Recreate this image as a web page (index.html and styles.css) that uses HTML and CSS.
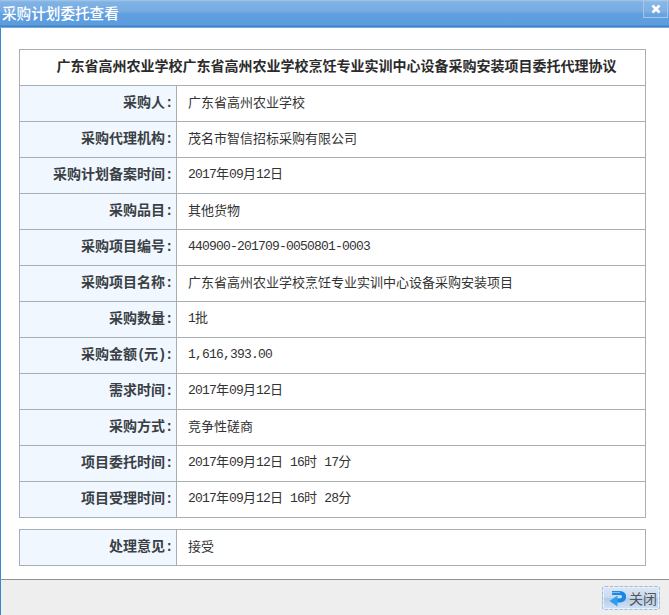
FILE: index.html
```html
<!DOCTYPE html>
<html lang="zh-CN">
<head>
<meta charset="utf-8">
<title>采购计划委托查看</title>
<link rel="stylesheet" href="styles.css">
</head>
<body>
<div class="dialog">
  <header class="titlebar">
    <span class="title">采购计划委托查看</span>
    <button class="close-x" type="button" aria-label="关闭">
      <svg width="10" height="10" viewBox="0 0 10 10"><path d="M1.5 1.5 L8.5 8.5 M8.5 1.5 L1.5 8.5" stroke="#fff" stroke-width="2.6" fill="none"/></svg>
    </button>
  </header>
  <main class="content">
    <table class="info">
      <colgroup><col class="col-label"><col></colgroup>
      <tr><th class="head" colspan="2">广东省高州农业学校广东省高州农业学校烹饪专业实训中心设备采购安装项目委托代理协议</th></tr>
      <tr><th>采购人<span class="num">:</span></th><td>广东省高州农业学校</td></tr>
      <tr><th>采购代理机构<span class="num">:</span></th><td>茂名市智信招标采购有限公司</td></tr>
      <tr><th>采购计划备案时间<span class="num">:</span></th><td><span class="num">2017</span>年<span class="num">09</span>月<span class="num">12</span>日</td></tr>
      <tr><th>采购品目<span class="num">:</span></th><td>其他货物</td></tr>
      <tr><th>采购项目编号<span class="num">:</span></th><td><span class="num">440900-201709-0050801-0003</span></td></tr>
      <tr><th>采购项目名称<span class="num">:</span></th><td>广东省高州农业学校烹饪专业实训中心设备采购安装项目</td></tr>
      <tr><th>采购数量<span class="num">:</span></th><td><span class="num">1</span>批</td></tr>
      <tr><th>采购金额<span class="num">(</span>元<span class="num">):</span></th><td><span class="num">1,616,393.00</span></td></tr>
      <tr><th>需求时间<span class="num">:</span></th><td><span class="num">2017</span>年<span class="num">09</span>月<span class="num">12</span>日</td></tr>
      <tr><th>采购方式<span class="num">:</span></th><td>竞争性磋商</td></tr>
      <tr><th>项目委托时间<span class="num">:</span></th><td><span class="num">2017</span>年<span class="num">09</span>月<span class="num">12</span>日<span class="num"> 16</span>时<span class="num"> 17</span>分</td></tr>
      <tr><th>项目受理时间<span class="num">:</span></th><td><span class="num">2017</span>年<span class="num">09</span>月<span class="num">12</span>日<span class="num"> 16</span>时<span class="num"> 28</span>分</td></tr>
    </table>
    <table class="info opinion">
      <colgroup><col class="col-label"><col></colgroup>
      <tr><th>处理意见<span class="num">:</span></th><td>接受</td></tr>
    </table>
  </main>
  <footer class="footer">
    <button class="close-btn" type="button">
      <svg class="close-icon" width="17" height="17" viewBox="0 0 17 17">
        <path d="M3 3 H11 C16.5 3 16.5 10.5 11 10.5 H7" fill="none" stroke="#1a86e4" stroke-width="4"/>
        <path d="M3 2.5 H11" fill="none" stroke="#6cc0f5" stroke-width="1.2"/>
        <path d="M8.5 5.5 V16.5 L0.5 11 Z" fill="#2f9cf0"/>
      </svg>关闭
    </button>
  </footer>
</div>
</body>
</html>
```

FILE: styles.css
```css
* { box-sizing: border-box; }
html, body { margin: 0; height: 100%; }
body {
  font-family: "Noto Sans CJK SC", "Liberation Sans", sans-serif;
  font-size: 14px;
  color: #333;
  background: #fff;
}
.dialog {
  width: 669px;
  height: 615px;
  display: flex;
  flex-direction: column;
  overflow: hidden;
}
.titlebar {
  height: 28px;
  flex: none;
  display: flex;
  justify-content: space-between;
  align-items: flex-start;
  padding-left: 2px;
  background: linear-gradient(#a9c8e6 0, #7fb3e6 2px, #77ace2 11px, #609fdf 14px, #5d9cdd 25px, #3f83cc 26px, #3f83cc 27px, #b5d0ec 28px);
}
.title {
  color: #fff;
  font-size: 14.6px;
  font-weight: 500;
  line-height: 26px;
  white-space: nowrap;
}
.close-x {
  width: 25px;
  height: 18px;
  margin: 0 1px 0 0;
  padding: 0;
  display: flex;
  align-items: center;
  justify-content: center;
  background: rgba(255, 255, 255, 0.06);
  border: 1px solid #a3c6ea;
  border-top: 0;
}
.content {
  flex: 1;
  min-height: 0;
  padding: 21px 23px 0 18px;
  border-left: 1px solid #3c86d0;
}
.info {
  width: 627px;
  border-collapse: collapse;
  table-layout: fixed;
  border: 1px solid #a7afb3;
}
.col-label { width: 157px; }
.opinion { margin-top: 11px; }
.info tr { height: 36px; }
.info th, .info td {
  border: 1px solid #a7afb3;
  padding: 0 0 3px;
  line-height: 20px;
  white-space: nowrap;
}
.info th {
  font-size: 14px;
  background: #f0f7fe;
  text-align: right;
  font-weight: 700;
  padding-right: 4px;
  color: #3a3f45;
}
.info th.head {
  background: #fff;
  text-align: center;
  color: #2b2b2b;
  padding: 0 0 5px 8px;
}
.info td {
  font-size: 13px;
  padding-left: 11px;
  background: #fff;
}
.num {
  font-family: "Liberation Mono", monospace;
  font-size: 13px;
  letter-spacing: -0.8px;
  white-space: pre;
}
.info th .num {
  font-size: 14px;
  letter-spacing: -1.4px;
}
.footer {
  height: 36px;
  flex: none;
  display: flex;
  justify-content: flex-end;
  align-items: flex-start;
  padding: 6px 9px 0 0;
  background: #eeeeee;
  border-top: 1px solid #8f9396;
  border-left: 1px solid #3c86d0;
}
.close-btn {
  width: 58px;
  height: 24px;
  padding: 0 0 0 6px;
  display: flex;
  align-items: center;
  gap: 3px;
  font-family: inherit;
  font-size: 14px;
  color: #555;
  border: 1px dashed #9dbce0;
  border-radius: 3px;
  box-shadow: inset 0 0 0 1px #e8f0fa;
  background: linear-gradient(#dbe7f5 0, #c7d9ef 50%, #b4cbe6 52%, #d3e2f4 100%);
  white-space: nowrap;
}
.close-icon { flex: none; }
```
